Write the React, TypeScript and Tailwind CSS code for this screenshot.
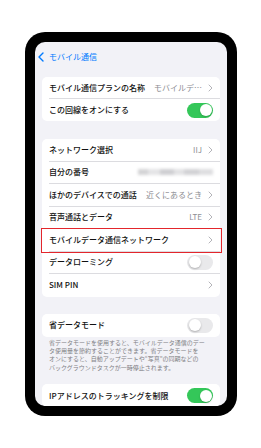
import React from "react";

const Chevron = () => (
  <svg width="5" height="8" viewBox="0 0 5 8" className="shrink-0">
    <path d="M1 1 L4 4 L1 7" fill="none" stroke="#b4b4b9" strokeWidth="1" strokeLinecap="round" strokeLinejoin="round" />
  </svg>
);

const Toggle = ({ on }: { on: boolean }) =>
  on ? (
    <div className="w-[26px] h-[15px] rounded-full bg-[#34c759] p-[1.5px] flex justify-end shrink-0">
      <div className="w-[12px] h-[12px] rounded-full bg-white shadow-[0_1px_2px_rgba(0,0,0,0.2)]" />
    </div>
  ) : (
    <div className="w-[26px] h-[15px] rounded-full bg-[#e9e9eb] p-[1.5px] flex justify-start shrink-0">
      <div className="w-[12px] h-[12px] rounded-full bg-white shadow-[0_1px_2px_rgba(0,0,0,0.25)]" />
    </div>
  );

type RowProps = {
  label: string;
  value?: React.ReactNode;
  chevron?: boolean;
  toggle?: boolean | null;
  last?: boolean;
  highlight?: boolean;
  h?: string;
};

const Row = ({ label, value, chevron, toggle, last, highlight, h }: RowProps) => (
  <div className={"relative flex pl-[7px] " + (h ?? "h-[22.5px]")}>
    <div
      className={
        "flex-1 flex items-center justify-between pr-[7px] " +
        (last ? "" : "border-b-[0.5px] border-[#dcdce0]")
      }
    >
      <span className="text-[8px] leading-none font-medium text-[#111] whitespace-nowrap">{label}</span>
      <div className="flex items-center gap-[6px]">
        {value}
        {chevron && <Chevron />}
        {toggle !== undefined && toggle !== null && <Toggle on={toggle} />}
      </div>
    </div>
    {highlight && (
      <div className="absolute -left-[1px] -right-[2px] -top-[1px] -bottom-[1px] border border-[#e3262c]" />
    )}
  </div>
);

const Value = ({ children }: { children: React.ReactNode }) => (
  <span className="text-[8px] leading-none text-[#8e8e93] whitespace-nowrap">{children}</span>
);

export default function App() {
  return (
    <div className="w-[261px] h-[448px] bg-white font-['Noto_Sans_CJK_JP',sans-serif] pt-[32px] pl-[25px]">
      <div className="w-[212px] h-[384px] bg-black rounded-[20px] p-[10px]">
        <div className="w-full h-full bg-[#f2f2f7] rounded-[10px] overflow-hidden px-[7px]">
          <div className="h-[30px] flex items-center gap-[5px] -ml-[4px]">
            <svg width="6" height="10" viewBox="0 0 6 10" className="shrink-0">
              <path d="M5 1 L1 5 L5 9" fill="none" stroke="#007aff" strokeWidth="1.4" strokeLinecap="round" strokeLinejoin="round" />
            </svg>
            <span className="text-[8px] leading-none text-[#007aff]">モバイル通信</span>
          </div>

          <div className="mt-[5px] bg-white rounded-[5px]">
            <Row label="モバイル通信プランの名称" value={<Value>モバイルデ…</Value>} chevron h="h-[22px]" />
            <Row label="この回線をオンにする" toggle={true} last h="h-[22px]" />
          </div>

          <div className="mt-[18px] bg-white rounded-[5px]">
            <Row label="ネットワーク選択" value={<Value>IIJ</Value>} chevron />
            <Row
              label="自分の番号"
              value={
                <div className="flex items-center w-[75px] h-[8px] blur-[1.5px]">
                  <div className="w-[10px] h-[6px] bg-[#d4d4d6]" />
                  <div className="w-[12px] h-[6px] bg-[#e4e4e6]" />
                  <div className="w-[14px] h-[6px] bg-[#cfcfd2]" />
                  <div className="w-[10px] h-[6px] bg-[#e2e2e4]" />
                  <div className="w-[15px] h-[6px] bg-[#d2d2d5]" />
                  <div className="w-[14px] h-[6px] bg-[#dedee0]" />
                </div>
              }
            />
            <Row label="ほかのデバイスでの通話" value={<Value>近くにあるとき</Value>} chevron />
            <Row label="音声通話とデータ" value={<Value>LTE</Value>} chevron />
            <Row label="モバイルデータ通信ネットワーク" chevron highlight />
            <Row label="データローミング" toggle={false} />
            <Row label="SIM PIN" chevron last />
          </div>

          <div className="mt-[17px] bg-white rounded-[5px]">
            <Row label="省データモード" toggle={false} last h="h-[23px]" />
          </div>
          <div className="pl-[7px] pt-[2px] text-[6px] leading-[8.4px] text-[#7f7f84] whitespace-nowrap">
            <div>省データモードを使用すると、モバイルデータ通信のデー</div>
            <div>タ使用量を節約することができます。省データモードを</div>
            <div>オンにすると、自動アップデートや“写真”の同期などの</div>
            <div>バックグラウンドタスクが一時停止されます。</div>
          </div>

          <div className="mt-[12px] bg-white rounded-[5px]">
            <Row label="IPアドレスのトラッキングを制限" toggle={true} last h="h-[23px]" />
          </div>
        </div>
      </div>
    </div>
  );
}
